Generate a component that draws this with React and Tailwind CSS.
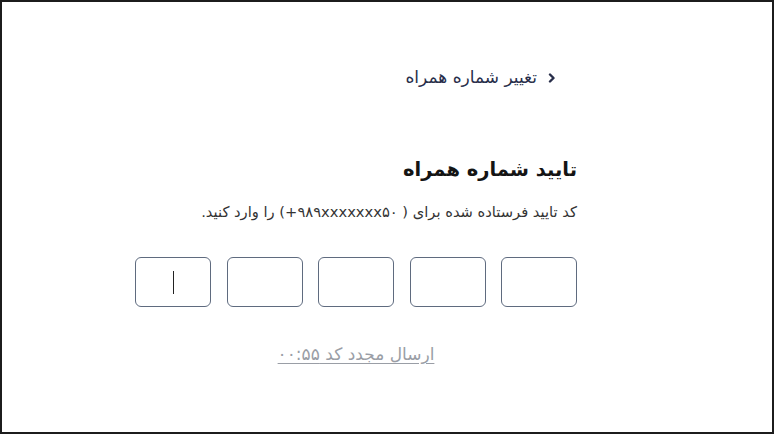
import React from 'react';

export default function App() {
  const boxes = [0, 1, 2, 3, 4];

  return (
    <main
      dir="rtl"
      className="w-full h-[434px] border-2 border-[#1c1c1c] bg-white flex justify-center pr-[62px]"
      style={{ fontFamily: '"DejaVu Sans", "Noto Sans", sans-serif' }}
    >
      <div className="w-[442px] flex flex-col pt-[64px]">
        {/* back link */}
        <a href="#" className="flex items-center gap-[11px] pr-[21px] h-6 text-[17px] text-[#282e4a]">
          <svg width="8" height="10" viewBox="0 0 8 10" fill="none" stroke="currentColor" strokeWidth="2.4" strokeLinecap="round" strokeLinejoin="round">
            <path d="M2 1.5 L5.5 5 L2 8.5" />
          </svg>
          <span>تغییر شماره همراه</span>
        </a>

        <h1 className="mt-[64px] text-[19.5px] leading-8 font-bold text-[#141414]">تایید شماره همراه</h1>
        <p className="mt-[14px] text-[14.7px] leading-6 text-[#333333]">
          کد تایید فرستاده شده برای ( <span dir="ltr">+۹۸۹xxxxxxx۵۰</span>) را وارد کنید.
        </p>

        <div dir="ltr" className="mt-[33px] flex justify-between">
          {boxes.map((i) => (
            <div
              key={i}
              className="w-[76px] h-[50px] rounded-[6px] border border-[#5f6b7f] flex items-center justify-center"
            >
              {i === 0 && <span className="block w-px h-[23px] bg-[#222]" />}
            </div>
          ))}
        </div>

        <div className="mt-[35px] flex justify-center">
          <a href="#" className="text-[17px] leading-6 text-[#9a9ea6] underline underline-offset-[3px]">
            ارسال مجدد کد ۰۰:۵۵
          </a>
        </div>
      </div>
    </main>
  );
}
